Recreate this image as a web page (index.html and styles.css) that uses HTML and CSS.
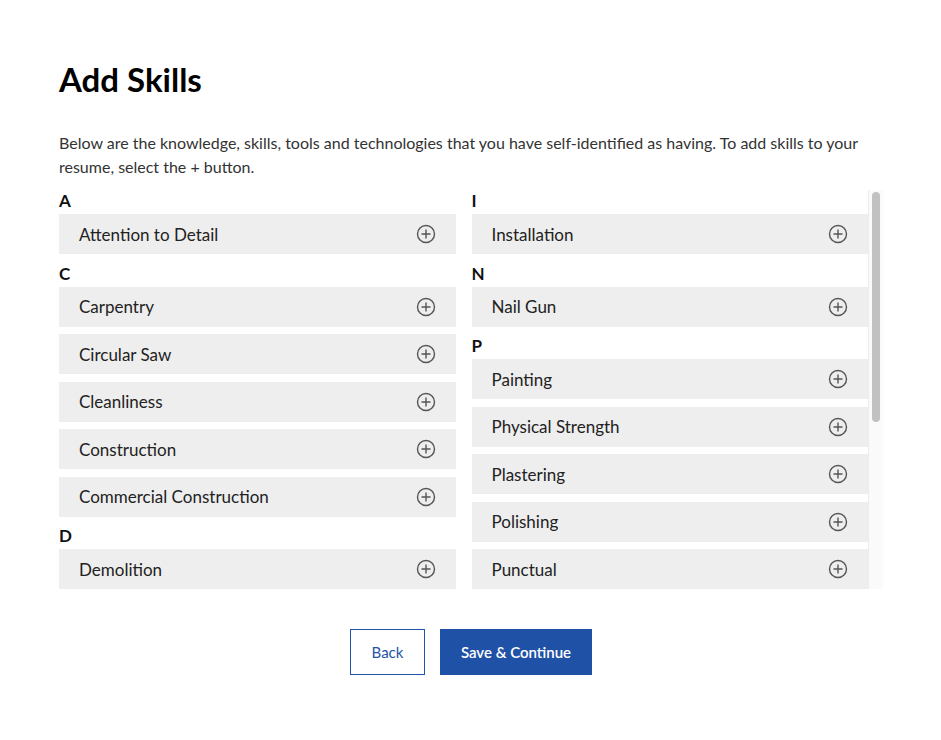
FILE: index.html
```html
<!DOCTYPE html>
<html lang="en">
<head>
    <meta charset="UTF-8">
    <meta name="viewport" content="width=device-width, initial-scale=1.0">
    <title>Add Skills</title>
    <link rel="stylesheet" href="styles.css">
</head>
<body>

<main class="page">
    <h1>Add Skills</h1>
    <p class="intro">Below are the knowledge, skills, tools and technologies that you have self-identified as having. To add skills to your resume, select the + button.</p>

    <div class="skills-box">
        <div class="skills-grid">
            <div class="skill-col">
                <div class="letter">A</div>
                <div class="skill">Attention to Detail <span class="add"><svg viewBox="0 0 20 20"><circle cx="10" cy="10" r="8.5"/><path d="M10 5.5v9M5.5 10h9"/></svg></span></div>
                <div class="letter">C</div>
                <div class="skill">Carpentry <span class="add"><svg viewBox="0 0 20 20"><circle cx="10" cy="10" r="8.5"/><path d="M10 5.5v9M5.5 10h9"/></svg></span></div>
                <div class="skill">Circular Saw <span class="add"><svg viewBox="0 0 20 20"><circle cx="10" cy="10" r="8.5"/><path d="M10 5.5v9M5.5 10h9"/></svg></span></div>
                <div class="skill">Cleanliness <span class="add"><svg viewBox="0 0 20 20"><circle cx="10" cy="10" r="8.5"/><path d="M10 5.5v9M5.5 10h9"/></svg></span></div>
                <div class="skill">Construction <span class="add"><svg viewBox="0 0 20 20"><circle cx="10" cy="10" r="8.5"/><path d="M10 5.5v9M5.5 10h9"/></svg></span></div>
                <div class="skill">Commercial Construction <span class="add"><svg viewBox="0 0 20 20"><circle cx="10" cy="10" r="8.5"/><path d="M10 5.5v9M5.5 10h9"/></svg></span></div>
                <div class="letter">D</div>
                <div class="skill">Demolition <span class="add"><svg viewBox="0 0 20 20"><circle cx="10" cy="10" r="8.5"/><path d="M10 5.5v9M5.5 10h9"/></svg></span></div>
            </div>
            <div class="skill-col">
                <div class="letter">I</div>
                <div class="skill">Installation <span class="add"><svg viewBox="0 0 20 20"><circle cx="10" cy="10" r="8.5"/><path d="M10 5.5v9M5.5 10h9"/></svg></span></div>
                <div class="letter">N</div>
                <div class="skill">Nail Gun <span class="add"><svg viewBox="0 0 20 20"><circle cx="10" cy="10" r="8.5"/><path d="M10 5.5v9M5.5 10h9"/></svg></span></div>
                <div class="letter">P</div>
                <div class="skill">Painting <span class="add"><svg viewBox="0 0 20 20"><circle cx="10" cy="10" r="8.5"/><path d="M10 5.5v9M5.5 10h9"/></svg></span></div>
                <div class="skill">Physical Strength <span class="add"><svg viewBox="0 0 20 20"><circle cx="10" cy="10" r="8.5"/><path d="M10 5.5v9M5.5 10h9"/></svg></span></div>
                <div class="skill">Plastering <span class="add"><svg viewBox="0 0 20 20"><circle cx="10" cy="10" r="8.5"/><path d="M10 5.5v9M5.5 10h9"/></svg></span></div>
                <div class="skill">Polishing <span class="add"><svg viewBox="0 0 20 20"><circle cx="10" cy="10" r="8.5"/><path d="M10 5.5v9M5.5 10h9"/></svg></span></div>
                <div class="skill">Punctual <span class="add"><svg viewBox="0 0 20 20"><circle cx="10" cy="10" r="8.5"/><path d="M10 5.5v9M5.5 10h9"/></svg></span></div>
            </div>
        </div>
        <div class="scroll-track"><div class="scroll-thumb"></div></div>
    </div>

    <div class="actions">
        <button class="btn btn-outline">Back</button>
        <button class="btn btn-primary">Save &amp; Continue</button>
    </div>
</main>

</body>
</html>
```

FILE: styles.css
```css
body {
    font-family: Lato, "Open Sans", Arial, sans-serif;
    margin: 0;
    background-color: #fff;
    color: #222;
}
.page {
    padding: 58px 58px 0 59px;
}
h1 {
    margin: 0;
    font-size: 33px;
    font-weight: 700;
    line-height: 42px;
    color: #000;
}
.intro {
    margin: 31px 0 11px;
    font-size: 16px;
    line-height: 24px;
    color: #333;
}
.skills-box {
    display: flex;
    height: 399px;
    overflow: hidden;
}
.skills-grid {
    flex: 1;
    display: grid;
    grid-template-columns: 1fr 1fr;
    column-gap: 16px;
    align-items: start;
}
.scroll-track {
    flex: none;
    box-sizing: border-box;
    width: 15px;
    padding: 2px 3px 0 3px;
    background: #fafafa;
    border-left: 1px solid #ececec;
}
.scroll-thumb {
    height: 230px;
    background: #c1c1c1;
    border-radius: 4px;
}
.letter {
    height: 25px;
    line-height: 24px;
    font-size: 17px;
    font-weight: 700;
    color: #111;
}
.letter:first-child {
    height: 24px;
    line-height: 22px;
}
.skill {
    display: flex;
    align-items: center;
    justify-content: space-between;
    height: 40px;
    padding: 0 20px 0 20px;
    margin-bottom: 7.5px;
    background-color: #eeeeee;
    font-size: 17px;
    color: #222;
}
.add {
    display: flex;
    width: 20px;
    height: 20px;
}
.add svg {
    width: 20px;
    height: 20px;
    fill: none;
    stroke: #555;
    stroke-width: 1.4;
}
.actions {
    display: flex;
    justify-content: center;
    gap: 15px;
    margin-top: 40px;
}
.btn {
    height: 46px;
    font-family: inherit;
    font-size: 15px;
    cursor: pointer;
}
.btn-outline {
    width: 75px;
    background: #fff;
    border: 1px solid #1f54a8;
    color: #1f54a8;
}
.btn-primary {
    width: 152px;
    background: #1f52a6;
    border: 1px solid #1f52a6;
    color: #fff;
    font-weight: 600;
}
```
